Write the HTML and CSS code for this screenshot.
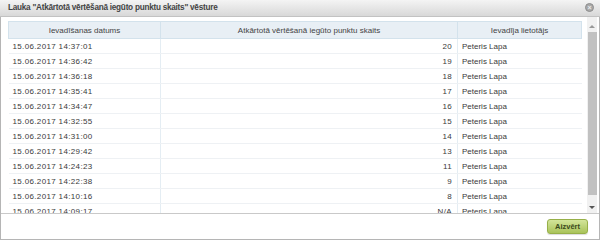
FILE: index.html
```html
<!DOCTYPE html>
<html lang="lv">
<head>
  <meta charset="UTF-8" />
  <title>Lauka vēsture</title>
  <link rel="stylesheet" href="styles.css">
</head>
<body>
  <div class="dialog">
    <div class="titlebar">
      <span class="title">Lauka "Atkārtotā vērtēšanā iegūto punktu skaits" vēsture</span>
      <span class="close">&#215;</span>
    </div>
    <div class="content">
      <div class="grid-wrap">
        <table class="grid">
          <thead>
            <tr>
              <th class="c-date">Ievadīšanas datums</th>
              <th class="c-val">Atkārtotā vērtēšanā iegūto punktu skaits</th>
              <th class="c-user">Ievadīja lietotājs</th>
            </tr>
          </thead>
          <tbody>
            <tr><td class="date">15.06.2017 14:37:01</td><td class="num">20</td><td>Peteris Lapa</td></tr>
            <tr><td class="date">15.06.2017 14:36:42</td><td class="num">19</td><td>Peteris Lapa</td></tr>
            <tr><td class="date">15.06.2017 14:36:18</td><td class="num">18</td><td>Peteris Lapa</td></tr>
            <tr><td class="date">15.06.2017 14:35:41</td><td class="num">17</td><td>Peteris Lapa</td></tr>
            <tr><td class="date">15.06.2017 14:34:47</td><td class="num">16</td><td>Peteris Lapa</td></tr>
            <tr><td class="date">15.06.2017 14:32:55</td><td class="num">15</td><td>Peteris Lapa</td></tr>
            <tr><td class="date">15.06.2017 14:31:00</td><td class="num">14</td><td>Peteris Lapa</td></tr>
            <tr><td class="date">15.06.2017 14:29:42</td><td class="num">13</td><td>Peteris Lapa</td></tr>
            <tr><td class="date">15.06.2017 14:24:23</td><td class="num">11</td><td>Peteris Lapa</td></tr>
            <tr><td class="date">15.06.2017 14:22:38</td><td class="num">9</td><td>Peteris Lapa</td></tr>
            <tr><td class="date">15.06.2017 14:10:16</td><td class="num">8</td><td>Peteris Lapa</td></tr>
            <tr><td class="date">15.06.2017 14:09:17</td><td class="num">N/A</td><td>Peteris Lapa</td></tr>
          </tbody>
        </table>
      </div>
      <div class="scrollbar">
        <span class="arrow up"></span>
        <span class="thumb"></span>
        <span class="arrow down"></span>
      </div>
    </div>
    <div class="footer">
      <button class="btn">Aizvērt</button>
    </div>
  </div>
</body>
</html>
```

FILE: styles.css
```css
body {
  margin: 0;
  font-family: 'Liberation Sans', Arial, sans-serif;
  font-size: 8px;
  color: #3a3a3a;
  background: #fff;
}
.dialog {
  width: 600px;
  height: 240px;
  box-sizing: border-box;
  border: 1px solid #b5b5b5;
  border-top: none;
  display: flex;
  flex-direction: column;
  background: #fff;
}
.titlebar {
  height: 17px;
  flex: none;
  display: flex;
  align-items: center;
  justify-content: space-between;
  padding: 0 6px 1px 8px;
  background: linear-gradient(#f4f4f4, #d8d8d8);
  border-bottom: 1px solid #c2c2c2;
  box-sizing: border-box;
  margin: 0 -1px;
}
.title {
  font-weight: bold;
  font-size: 8.2px;
  letter-spacing: -0.25px;
  color: #444;
}
.close {
  width: 7px;
  height: 7px;
  border-radius: 50%;
  background: #a8a8a8;
  border: 1px solid #8e8e8e;
  color: #ececec;
  font-size: 7px;
  line-height: 7px;
  text-align: center;
  font-weight: bold;
}
.content {
  flex: 1;
  display: flex;
  overflow: hidden;
  min-height: 0;
  border-bottom: 1px solid #c9c9c9;
}
.grid-wrap {
  flex: 1;
  overflow: hidden;
  padding: 4px 5px 0 7px;
}
.grid {
  width: 574px;
  border-collapse: collapse;
  table-layout: fixed;
}
.grid th {
  height: 16px;
  background: #e8eff5;
  border: 1px solid #d3e2ec;
  font-weight: normal;
  color: #444;
  padding: 0 4px;
  text-align: center;
}
.c-date { width: 143px; }
.c-val { width: 288px; }
.grid td {
  height: 14px;
  padding: 0 3px 0 4px;
  border-bottom: 1px solid #eef1f4;
  border-left: 1px solid #e4edf3;
  white-space: nowrap;
}
.grid td:first-child { border-left: none; }
.grid td.date { letter-spacing: 0.35px; }
.grid td.num { text-align: right; padding-right: 5px; letter-spacing: 0.35px; }
.scrollbar {
  width: 10px;
  flex: none;
  margin-right: 2px;
  display: flex;
  flex-direction: column;
  align-items: center;
  padding-top: 5px;
  background: #f1f1f1;
}
.arrow {
  width: 0;
  height: 0;
  border-left: 3px solid transparent;
  border-right: 3px solid transparent;
  margin: 3px 0;
}
.arrow.up { border-bottom: 3px solid #999; }
.arrow.down { border-top: 3px solid #555; margin-bottom: 4px; }
.thumb {
  width: 9px;
  flex: 1;
  background: #c1c1c1;
  margin: 1px 0 8px;
}
.footer {
  height: 25px;
  flex: none;
  display: flex;
  align-items: center;
  justify-content: flex-end;
  padding-right: 11px;
}
.btn {
  font-family: 'Liberation Sans', Arial, sans-serif;
  font-size: 7.5px;
  font-weight: bold;
  color: #3b4a1c;
  width: 41px;
  height: 15px;
  padding: 0;
  border: 1px solid #97b049;
  border-radius: 3px;
  background: linear-gradient(#d3e59a, #a9c35a);
  box-shadow: 0 1px 1px rgba(0,0,0,0.15);
}
```
